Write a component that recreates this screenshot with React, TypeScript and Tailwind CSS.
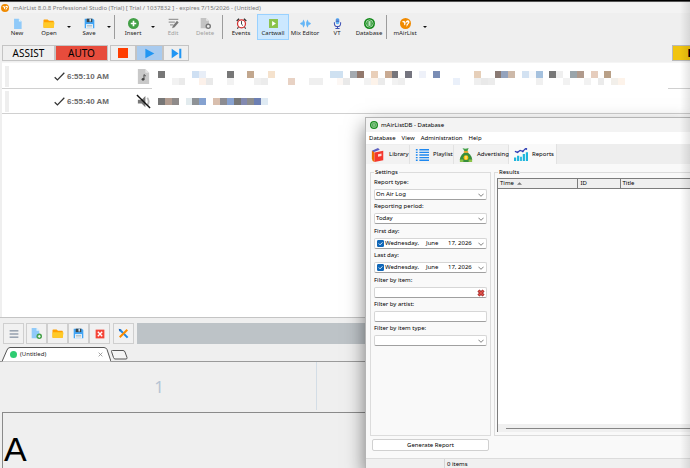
import clsx from "clsx"
import React, { useState } from "react"

type Cell = [column: number, row: number, color: string]

interface IPlaylistItem {
  time: string
  muted: boolean
  columns: number
  rows: number
  cells: Cell[]
}

const PLAYLIST: IPlaylistItem[] = [
  {
    time: "6:55:10 AM",
    muted: false,
    columns: 68,
    rows: 2,
    cells: [
      [0, 0, "#777777"],
      [5, 0, "#cfe0f3"],
      [6, 0, "#e8eef7"],
      [10, 0, "#777777"],
      [13, 0, "#c2a78e"],
      [16, 0, "#f5e2cd"],
      [25, 0, "#cfe1f1"],
      [26, 0, "#cfe1f1"],
      [28, 0, "#a4aab0"],
      [29, 0, "#92786c"],
      [31, 0, "#e9cfb9"],
      [33, 0, "#c9aa92"],
      [34, 0, "#75757b"],
      [36, 0, "#75757f"],
      [38, 0, "#eef1f9"],
      [40, 0, "#7a8db5"],
      [46, 0, "#e6cfb9"],
      [49, 0, "#8a7a74"],
      [50, 0, "#94a3bd"],
      [51, 0, "#cdb9a9"],
      [53, 0, "#d3e2f2"],
      [54, 0, "#f7f9fc"],
      [55, 0, "#a5c1de"],
      [57, 0, "#777777"],
      [58, 0, "#efefef"],
      [60, 0, "#9aa5ab"],
      [61, 0, "#b09a8c"],
      [63, 0, "#e6cdbd"],
      [65, 0, "#b9a087"],
      [2, 1, "#f2f2f2"],
      [3, 1, "#eaeaea"],
      [6, 1, "#fcf1ea"],
      [7, 1, "#e9e9e9"],
      [10, 1, "#f2f2f2"],
      [14, 1, "#f0f0f0"],
      [15, 1, "#ececec"],
      [19, 1, "#e8d2c4"],
      [22, 1, "#efefef"],
      [23, 1, "#efefef"],
      [26, 1, "#fcf7f4"],
      [27, 1, "#e9e9e9"],
      [30, 1, "#f2f2f2"],
      [31, 1, "#fdf3ea"],
      [32, 1, "#ebebeb"],
      [34, 1, "#f2f2f2"],
      [35, 1, "#eeeeee"],
      [43, 1, "#eaf0fa"],
      [46, 1, "#efefef"],
      [47, 1, "#e9e9e9"],
      [48, 1, "#ececec"],
      [55, 1, "#f0f0f0"],
      [59, 1, "#f2f2f2"],
      [62, 1, "#f2f2f2"],
      [64, 1, "#ebebeb"],
      [66, 1, "#f2efea"],
      [67, 1, "#fdf3ea"],
    ],
  },
  {
    time: "6:55:40 AM",
    muted: true,
    columns: 16,
    rows: 1,
    cells: [
      [0, 0, "#777777"],
      [1, 0, "#b29d91"],
      [2, 0, "#8f8b8a"],
      [4, 0, "#e2ebee"],
      [5, 0, "#8e9296"],
      [6, 0, "#85a2d0"],
      [8, 0, "#d9bfae"],
      [9, 0, "#8c8c92"],
      [10, 0, "#88a2d0"],
      [11, 0, "#777777"],
      [12, 0, "#8289b0"],
      [13, 0, "#8d8d8d"],
      [14, 0, "#6c7fb3"],
      [15, 0, "#dfeaf3"],
    ],
  },
]

const Icon: React.FC<{ className?: string; children: React.ReactNode }> = ({
  className = "size-[11px]",
  children,
}) => (
  <svg viewBox="0 0 16 16" className={clsx("block shrink-0", className)} fill="none" aria-hidden>
    {children}
  </svg>
)

const NewIcon = () => (
  <Icon>
    <path d="M3 1h7l4 4v11H3z" fill="#90caf9" />
    <path d="M10 1l4 4h-4z" fill="#e1f5fe" />
  </Icon>
)

const FolderIcon = () => (
  <Icon className="h-[11px] w-3">
    <path d="M0 3q0-1 1-1h5l2 2h6q1 0 1 1v9H0z" fill="#ffa000" />
    <path d="M1 6h14q1 0 1 1l-1 6q0 1-1 1H1q-1 0-1-1V7q0-1 1-1z" fill="#ffca28" />
  </Icon>
)

const SaveIcon = () => (
  <Icon>
    <path d="M1 1h12l2 2v12H1z" fill="#42a5f5" />
    <path d="M4 1h8v5H4z" fill="#37474f" />
    <path d="M8 1h2v4H8z" fill="#e3f2fd" />
    <path d="M3 9h10v6H3z" fill="#fff" />
    <path d="M4 11h8M4 13h8" stroke="#90a4ae" />
  </Icon>
)

const InsertIcon = () => (
  <Icon>
    <circle cx="8" cy="8" r="8" fill="#43a047" />
    <path d="M8 4v8M4 8h8" stroke="#fff" strokeWidth="2.4" />
  </Icon>
)

const EditIcon = () => (
  <Icon>
    <path d="M1 1h14v2H1zM1 5h9v2H1zM3 9h5v2H3z" fill="#9a9a9a" />
    <path d="M13 4l2.5 2.5-6 7L6 15l1-3.5z" fill="#787878" />
  </Icon>
)

const DeleteIcon = () => (
  <Icon>
    <path d="M1 0h8l4 4v11H1z" fill="#c3c3c3" />
    <path d="M9 0l4 4H9z" fill="#e8e8e8" />
    <circle cx="12" cy="12" r="3" fill="#eee" stroke="#777" strokeWidth="2" />
  </Icon>
)

const EventsIcon = () => (
  <Icon>
    <path d="M1 4.5L4.5 1M15 4.5L11.5 1" stroke="#333" strokeWidth="2" />
    <path d="M3.5 13L2 15.5M12.500 13l1.5 2.5" stroke="#333" strokeWidth="1.5" />
    <circle cx="8" cy="8.5" r="5.8" fill="#fff" stroke="#d32f2f" strokeWidth="1.8" />
    <path d="M8 4.5V9l2.2 2" stroke="#333" strokeWidth="1.3" />
  </Icon>
)

const CartwallIcon = () => (
  <Icon>
    <path d="M1.500 1.5h13v13h-13z" fill="#8bc34a" />
    <path d="M6 4.5L11.500 8 6 11.5z" fill="#fff" />
  </Icon>
)

const MixIcon = () => (
  <Icon>
    <path
      d="M0 8l2-2 1 1 2-5 2 4v4l-2 4-2-5-1 1zM16 8l-2-2-1 1-2-5-2 4v4l2 4 2-5 1 1z"
      fill="#64b5f6"
    />
  </Icon>
)

const MicIcon = () => (
  <Icon>
    <rect x="5.5" y="0" width="5" height="9" rx="2.5" fill="#64b5f6" />
    <path d="M5.500 3h5M5.500 5h5" stroke="#3949ab" />
    <path d="M3.500 6v2a4.500 4.500 0 009 0V6M8 12v3M5 15.300h6" stroke="#3f51b5" strokeWidth="1.5" />
  </Icon>
)

const DatabaseIcon = ({ className }: { className?: string }) => (
  <Icon className={className}>
    <circle cx="8" cy="8" r="8" fill="#158a1c" />
    <circle cx="8" cy="8" r="5.3" stroke="#d5efd5" />
    <path d="M6 4.500v7M8 4.500v7M10 4.500v7" stroke="#e6f7e6" strokeWidth="1.2" />
  </Icon>
)

const MairListIcon = ({ className }: { className?: string }) => (
  <Icon className={className}>
    <circle cx="8" cy="8" r="8" fill="#f08a00" />
    <path
      d="M2.500 5.500L6 4l2 2v3l-2 2V7zM8.500 5q3-3 5-.5 1.200 3-1.500 4.500l-2.500 4V9L12 7l-1-1-2.500 1z"
      fill="#fff"
    />
  </Icon>
)

const ChevronDown = () => (
  <Icon className="pointer-events-none size-[6px]">
    <path d="M1 4.500l7 7 7-7" stroke="#555" strokeWidth="2" />
  </Icon>
)

const DropArrow: React.FC<{ label: string }> = ({ label }) => (
  <button type="button" aria-label={label} className="flex h-[26px] w-2 items-center justify-center">
    <svg viewBox="0 0 8 4" className="h-[2px] w-1" aria-hidden>
      <path d="M0 0h8L4 4z" fill="#111" />
    </svg>
  </button>
)

const Separator = () => <div className="mr-[2px] ml-px h-6 w-px bg-[#9c9c9c]" />

interface IToolButtonProps {
  label: string
  icon: React.ReactNode
  active?: boolean
  disabled?: boolean
}

const ToolButton: React.FC<IToolButtonProps> = ({ label, icon, active, disabled }) => (
  <button
    type="button"
    disabled={disabled}
    className={clsx(
      "flex h-[26px] w-8 flex-col items-center border pt-[3px] whitespace-nowrap",
      active ? "border-[#99d1ff] bg-[#cce8ff]" : "border-transparent",
      disabled ? "text-[#a0a0a0]" : "text-[#222]"
    )}
  >
    {icon}
    <span className="leading-[9px]">{label}</span>
  </button>
)

const MainToolbar = () => (
  <div className="flex h-8 items-center pb-1 pl-px">
    <ToolButton label="New" icon={<NewIcon />} />
    <ToolButton label="Open" icon={<FolderIcon />} />
    <DropArrow label="Open recent" />
    <ToolButton label="Save" icon={<SaveIcon />} />
    <DropArrow label="Save options" />
    <Separator />
    <ToolButton label="Insert" icon={<InsertIcon />} />
    <DropArrow label="Insert options" />
    <ToolButton label="Edit" icon={<EditIcon />} disabled />
    <ToolButton label="Delete" icon={<DeleteIcon />} disabled />
    <Separator />
    <ToolButton label="Events" icon={<EventsIcon />} />
    <ToolButton label="Cartwall" icon={<CartwallIcon />} active />
    <ToolButton label="Mix Editor" icon={<MixIcon />} />
    <ToolButton label="VT" icon={<MicIcon />} />
    <ToolButton label="Database" icon={<DatabaseIcon />} />
    <Separator />
    <ToolButton label="mAirList" icon={<MairListIcon />} />
    <DropArrow label="mAirList options" />
  </div>
)

const transportClass = "flex h-4 items-center justify-center border border-[#c4c4c4]"

const TransportBar = () => (
  <div className="flex h-[17px] items-start pl-[2px] text-[10px] text-black">
    <button type="button" className={clsx(transportClass, "w-[53px]")}>
      ASSIST
    </button>
    <button type="button" className={clsx(transportClass, "w-[53px] bg-[#e74c3c]")}>
      AUTO
    </button>
    <div className="ml-[2px] flex">
      <button type="button" aria-label="Stop" className={clsx(transportClass, "w-[26px]")}>
        <span className="size-[10px] bg-[#ff3d00]" />
      </button>
      <button type="button" aria-label="Play" className={clsx(transportClass, "w-[27px] bg-[#a9cbef]")}>
        <Icon>
          <path d="M2 1l13 7-13 7z" fill="#2196f3" />
        </Icon>
      </button>
      <button type="button" aria-label="Next" className={clsx(transportClass, "w-[26px]")}>
        <Icon>
          <path d="M1 1l10 7-10 7zM12 1h3v14h-3z" fill="#2196f3" />
        </Icon>
      </button>
    </div>
    <button
      type="button"
      aria-label="Encoder"
      className="ml-auto flex h-4 w-[18px] items-center justify-end border border-r-0 border-[#b9b9b9] bg-[#f1c40f]"
    >
      <span className="h-2 w-[2px] border-l border-[#a03a00] bg-black" />
    </button>
  </div>
)

const PlaylistRow: React.FC<{ item: IPlaylistItem }> = ({ item }) => (
  <li className="flex h-[25px] items-center border-b border-[#d0d0d0] pl-[3px]">
    <div className="h-[21px] w-1 bg-[#eeeeee]" />
    <Icon className="ml-[45px] size-[11px]">
      <path d="M1 9l4 4L15 2.500" stroke="#333" strokeWidth="1.8" />
    </Icon>
    <span className="ml-[2px] w-[69px] font-[Liberation_Sans,sans-serif] text-[8px] font-bold text-[#6b6b6b]">
      {item.time}
    </span>
    {item.muted ? (
      <Icon className="size-[15px]">
        <path d="M2 6h4l4-4v12l-4-4H2z" fill="#777" />
        <path d="M12 4q3 4 0 8" stroke="#bbb" strokeWidth="2" />
        <path d="M1 1l14 14" stroke="#111" strokeWidth="1.5" />
      </Icon>
    ) : (
      <Icon className="size-[15px]">
        <path d="M2 0h8l4 4v12H2z" fill="#c9c9c9" />
        <path d="M10 0l4 4h-4z" fill="#e6e6e6" />
        <circle cx="7.5" cy="11" r="1.5" fill="#444" />
        <path d="M8.500 11V6l2 1.500" stroke="#444" />
      </Icon>
    )}
    {/* The censored title also hides the part of the row border beneath it */}
    <div
      className={clsx(
        "ml-px flex items-center pl-[6px]",
        item.muted ? "h-[7px]" : "-mb-px h-[25px] w-[516px] bg-white pt-[3px]"
      )}
    >
      <svg
        viewBox={`0 0 ${item.columns} ${item.rows}`}
        preserveAspectRatio="none"
        shapeRendering="crispEdges"
        className={clsx("shrink-0", item.muted ? "h-[7px] w-[110px]" : "h-[14px] w-[467px]")}
        aria-hidden
      >
        {item.cells.map(([column, row, color]) => (
          <rect key={`${column}-${row}`} x={column} y={row} width="1" height="1" fill={color} />
        ))}
      </svg>
    </div>
  </li>
)

const cartButtonClass = "flex size-[21px] items-center justify-center border border-[#cfcfcf] bg-[#f1f1f1]"

const CartToolbar = () => (
  <div className="flex pl-[3px]">
    <button type="button" aria-label="Menu" className={cartButtonClass}>
      <Icon className="size-[10px]">
        <path d="M1 3h14M1 8h14M1 13h14" stroke="#5f6f86" strokeWidth="1.5" />
      </Icon>
    </button>
    <div className="ml-[2px] flex">
      <button type="button" aria-label="New cart set" className={cartButtonClass}>
        <Icon>
          <path d="M1 0h7l4 4v11H1z" fill="#90caf9" />
          <path d="M8 0l4 4H8z" fill="#e1f5fe" />
          <circle cx="12" cy="12" r="4" fill="#43a047" />
          <path d="M12 10v4M10 12h4" stroke="#fff" strokeWidth="1.5" />
        </Icon>
      </button>
      <button type="button" aria-label="Open cart set" className={cartButtonClass}>
        <FolderIcon />
      </button>
      <button type="button" aria-label="Save cart set" className={cartButtonClass}>
        <SaveIcon />
      </button>
      <button type="button" aria-label="Close cart set" className={cartButtonClass}>
        <Icon className="size-[10px]">
          <path d="M1 1h14v14H1z" fill="#f44336" />
          <path d="M4.500 4.500l7 7M11.500 4.500l-7 7" stroke="#fff" strokeWidth="2.2" />
        </Icon>
      </button>
    </div>
    <button type="button" aria-label="Tools" className={clsx(cartButtonClass, "ml-[3px]")}>
      <Icon>
        <path d="M3 3l11 11" stroke="#1e88e5" strokeWidth="3" />
        <path d="M1 1l4 1-3 3z" fill="#1565c0" />
        <path d="M13.500 2.500l-11 11" stroke="#fb8c00" strokeWidth="3" />
      </Icon>
    </button>
    <div className="ml-[3px] flex-1 bg-[#bdc3c7]" />
  </div>
)

const CartTabs = () => (
  <div className="flex h-[18px] items-end border-b border-[#9a9a9a] pl-[2px]">
    <div className="relative -mb-px flex h-[15px] w-[109px] items-center pl-2">
      <svg viewBox="0 0 109 15" className="absolute inset-0 size-full" aria-hidden>
        <path d="M0 14.500L5 3Q6 .5 8 .5h94q2 0 3 2l4 12z" fill="#fff" />
        <path d="M0 14.500L5 3Q6 .5 8 .5h94q2 0 3 2l4 12" fill="none" stroke="#555" />
      </svg>
      <button type="button" className="relative flex flex-1 items-center gap-[3px]">
        <span className="size-[7px] rounded-full bg-[#2ecc71]" />
        (Untitled)
      </button>
      <button type="button" aria-label="Close tab" className="relative mr-2">
        <Icon className="size-[5px]">
          <path d="M2 2l12 12M14 2L2 14" stroke="#888" strokeWidth="2.5" />
        </Icon>
      </button>
    </div>
    <button type="button" aria-label="New tab" className="mb-px">
      <svg viewBox="0 0 17 10" className="h-[10px] w-[17px]" aria-hidden>
        <path
          d="M.5 1.500Q0 .5 1.500.5H12q1.500 0 2 1.500l2 5.500q.4 1.500-1 1.500H4Q3 9 2.500 7.500z"
          fill="#f4f4f4"
          stroke="#555"
        />
      </svg>
    </button>
  </div>
)

const Field: React.FC<{ id: string; label: string; children: React.ReactNode }> = ({
  id,
  label,
  children,
}) => (
  <div className="flex flex-col">
    <label htmlFor={id} className="leading-[13px]">
      {label}
    </label>
    <div className="flex h-[11px] items-center rounded-[2px] border border-[#d6d6d6] border-b-[#a0a0a0] bg-white">
      {children}
    </div>
  </div>
)

const SelectField: React.FC<{ id: string; label: string; options: string[] }> = ({
  id,
  label,
  options,
}) => (
  <Field id={id} label={label}>
    <select id={id} className="h-full min-w-0 flex-1 appearance-none pl-px leading-[9px] outline-none">
      {options.map((option) => (
        <option key={option}>{option}</option>
      ))}
    </select>
    <span className="mr-[2px]">
      <ChevronDown />
    </span>
  </Field>
)

const DateField: React.FC<{ id: string; label: string }> = ({ id, label }) => {
  const [enabled, setEnabled] = useState<boolean>(true)
  return (
    <Field id={id} label={label}>
      <span className="relative ml-[2px] flex size-[7px]">
        <input
          id={id}
          type="checkbox"
          checked={enabled}
          onChange={(event) => setEnabled(event.target.checked)}
          className="size-[7px] appearance-none rounded-[1px] border border-[#1067b8] bg-white checked:bg-[#1067b8]"
        />
        <svg viewBox="0 0 8 8" className="pointer-events-none absolute inset-0 size-[7px]" aria-hidden>
          <path d="M2 4l1.500 1.500L6.200 2.700" stroke="#fff" fill="none" />
        </svg>
      </span>
      <button type="button" className="ml-px flex flex-1 items-center leading-[9px]">
        <span className="w-[41px] text-left">Wednesday,</span>
        <span className="w-[22px] text-left">June</span>
        <span className="flex-1 text-left">17, 2026</span>
        <span className="mr-[2px]">
          <ChevronDown />
        </span>
      </button>
    </Field>
  )
}

const SettingsPanel = () => (
  <fieldset className="flex-1 border border-[#dcdcdc] px-[3px]">
    <legend className="px-px leading-[8px]">Settings</legend>
    <div className="flex flex-col gap-px">
      <div>
        <SelectField id="report-type" label="Report type:" options={["On Air Log"]} />
        <SelectField id="period" label="Reporting period:" options={["Today"]} />
      </div>
      <div>
        <DateField id="first-day" label="First day:" />
        <DateField id="last-day" label="Last day:" />
      </div>
      <div>
        <Field id="filter-item" label="Filter by item:">
          <input id="filter-item" type="text" className="min-w-0 flex-1 px-px outline-none" />
          <button type="button" aria-label="Clear item">
            <Icon className="mr-px size-2">
              <path d="M3 3l10 10M13 3L3 13" stroke="#8e1b1b" strokeWidth="6" />
              <path d="M3 3l10 10M13 3L3 13" stroke="#e0524b" strokeWidth="3" />
            </Icon>
          </button>
        </Field>
        <Field id="filter-artist" label="Filter by artist:">
          <input id="filter-artist" type="text" className="min-w-0 flex-1 px-px outline-none" />
        </Field>
        <SelectField id="filter-type" label="Filter by item type:" options={[""]} />
      </div>
    </div>
  </fieldset>
)

const ResultsPanel = () => (
  <fieldset className="mb-[22px] flex min-w-0 flex-1 flex-col border border-r-0 border-[#dcdcdc] pt-[2px] pb-[3px] pl-[2px]">
    <legend className="ml-px px-px leading-[8px]">Results</legend>
    <div className="flex flex-1 flex-col border border-r-0 border-b-0 border-[#7c7c7c] bg-white">
      <table className="w-full table-fixed border-collapse">
        <thead>
          <tr className="h-[9px] border-b border-[#7c7c7c] bg-[#efefef] text-left leading-[8px]">
            <th className="w-[79px] border-r border-[#7c7c7c] pl-[2px] font-normal">
              <span className="flex items-center gap-[3px]">
                Time
                <svg viewBox="0 0 8 4" className="h-[3px] w-[5px]" aria-hidden>
                  <path d="M4 0l4 4H0z" fill="#777" />
                </svg>
              </span>
            </th>
            <th className="w-[43px] border-r border-[#7c7c7c] pl-[3px] font-normal">ID</th>
            <th className="pl-[2px] font-normal">Title</th>
          </tr>
        </thead>
      </table>
      <div className="mt-auto flex h-2 items-center bg-[#f0f0f0] pl-2">
        <div className="h-px flex-1 bg-[#868686]" />
      </div>
    </div>
  </fieldset>
)

const MENU = ["Database", "View", "Administration", "Help"]

const DB_TABS = [
  {
    label: "Library",
    className: "w-[44px]",
    icon: (
      <Icon className="size-[14px]">
        <path d="M1 3l7-3 2 2-8 3z" fill="#5c5fc0" />
        <path d="M1 3l3 2v11q-3-1-3-4z" fill="#ef6c00" />
        <path d="M4 5l10-2v11L4 16z" fill="#f4372d" />
        <path d="M8 7l4-.8v3L8 10z" fill="#ffd9d4" />
      </Icon>
    ),
  },
  {
    label: "Playlist",
    className: "w-[44px]",
    icon: (
      <Icon className="size-[14px]">
        <path
          d="M1 2h2M1 5h2M1 8h2M1 11h2M1 14h2M5 2h11M5 5h11M5 8h11M5 11h11M5 14h11"
          stroke="#1e88f0"
          strokeWidth="1.5"
        />
      </Icon>
    ),
  },
  {
    label: "Advertising",
    className: "w-[55px]",
    icon: (
      <Icon className="size-[14px]">
        <path d="M4 0q3 1.500 7 0L9.500 4h-3z" fill="#43a047" />
        <path d="M6 5h4q5 4 5 8 0 3-3 3H4q-3 0-3-3 0-4 5-8z" fill="#388e3c" />
        <path d="M5.500 4.500h5" stroke="#ff9800" strokeWidth="1.5" />
        <circle cx="8" cy="11" r="2.8" fill="#ffc107" />
        <path d="M8 9v4" stroke="#fff8e1" />
        <path d="M1 13h4v3H1zM11 13h4v3h-4z" fill="#8bc34a" />
      </Icon>
    ),
  },
  {
    label: "Reports",
    className: "w-[48px]",
    icon: (
      <Icon className="size-[14px]">
        <path
          d="M0 12h2.500v4H0zM3.500 10H6v6H3.500zM7 11h2v5H7zM10 8h2.500v8H10zM13.500 6H16v10h-2.500z"
          fill="#1cb5dc"
        />
        <path d="M1 5l3 1 3-2 3 1 3-3 2 .5" stroke="#3040b5" strokeWidth="1.3" />
        <circle cx="4" cy="6" r="1" fill="#3040b5" />
        <circle cx="10" cy="5" r="1" fill="#3040b5" />
        <circle cx="14" cy="2" r="1" fill="#3040b5" />
      </Icon>
    ),
  },
]

const DatabaseWindow = () => {
  const [tab, setTab] = useState<string>("Reports")
  return (
    <section className="absolute top-[117px] right-0 bottom-0 left-[365px] flex flex-col border border-r-0 border-b-0 border-[#b4b4b4] bg-[#f9f9f9] whitespace-nowrap text-black shadow-[0_8px_18px_rgba(0,0,0,0.5)]">
      <header className="flex h-[14px] items-center gap-[3px] bg-[#f3f3f3] pl-1">
        <DatabaseIcon className="size-2" />
        <h2>mAirListDB - Database</h2>
      </header>
      <nav className="flex h-3 items-center gap-[6px] bg-white pl-[3px]">
        {MENU.map((item) => (
          <button key={item} type="button">
            {item}
          </button>
        ))}
      </nav>
      <div className="flex h-5 items-end bg-[#eeeeee]">
        {DB_TABS.map(({ label, icon, className }) => (
          <button
            key={label}
            type="button"
            onClick={() => setTab(label)}
            className={clsx(
              "flex items-center gap-1 border-r border-[#e2e2e2] pl-[5px]",
              className,
              tab === label ? "h-5 bg-[#f9f9f9]" : "h-[19px] bg-[#f2f2f2]"
            )}
          >
            {icon}
            {label}
          </button>
        ))}
      </div>
      <div className="flex flex-1 pt-1 pl-1">
        <div className="flex w-[121px] flex-col">
          <SettingsPanel />
          <button
            type="button"
            className="mx-[2px] mt-[3px] mb-[7px] h-3 rounded-[2px] border border-[#d0d0d0] bg-white"
          >
            Generate Report
          </button>
        </div>
        <div className="w-[3px]" />
        <ResultsPanel />
      </div>
      <footer className="flex h-[10px] border-t border-[#dcdcdc] bg-[#f0f0f0] leading-[11px]">
        <div className="w-[79px] border-r border-[#d5d5d5]" />
        <span className="pl-[2px]">0 items</span>
      </footer>
    </section>
  )
}

const App = () => (
  <div className="relative flex min-h-screen flex-col overflow-hidden bg-[#efefef] font-[Noto_Sans,sans-serif] text-[6px] leading-[9px] text-[#222]">
    <div className="h-[2px] border-b border-[#555] bg-black" />
    <header className="mt-px flex h-[10px] items-center gap-1 bg-[#f3f3f3] pl-px text-[#777]">
      <MairListIcon className="size-2" />
      <h1 className="whitespace-nowrap">
        mAirList 8.0.8 Professional Studio (Trial) [ Trial / 1037832 ] - expires 7/15/2026 - (Untitled)
      </h1>
    </header>
    <MainToolbar />
    <TransportBar />
    <ul className="ml-[2px] flex-1 border-t border-[#f5f5f5] bg-white pt-px">
      {PLAYLIST.map((item) => (
        <PlaylistRow key={item.time} item={item} />
      ))}
    </ul>
    <div className="mb-[5px] h-px bg-[#c4c4c4]" />
    <CartToolbar />
    <CartTabs />
    <div className="flex h-[48px] text-[17px] text-[#b6c4d4]">
      <div className="ml-[2px] flex w-[315px] items-center justify-center border-r border-[#d3dde6]">1</div>
    </div>
    <div className="mt-[2px] ml-[2px] flex h-[56px] items-end border-t border-l border-[#8a8a8a] pl-px font-[Liberation_Sans,sans-serif] text-[34px] leading-[38px] text-black">
      A
    </div>
    <DatabaseWindow />
    <div className="pointer-events-none absolute inset-y-0 right-0 w-[10px] bg-linear-to-r from-transparent to-black/10" />
  </div>
)

export default App
